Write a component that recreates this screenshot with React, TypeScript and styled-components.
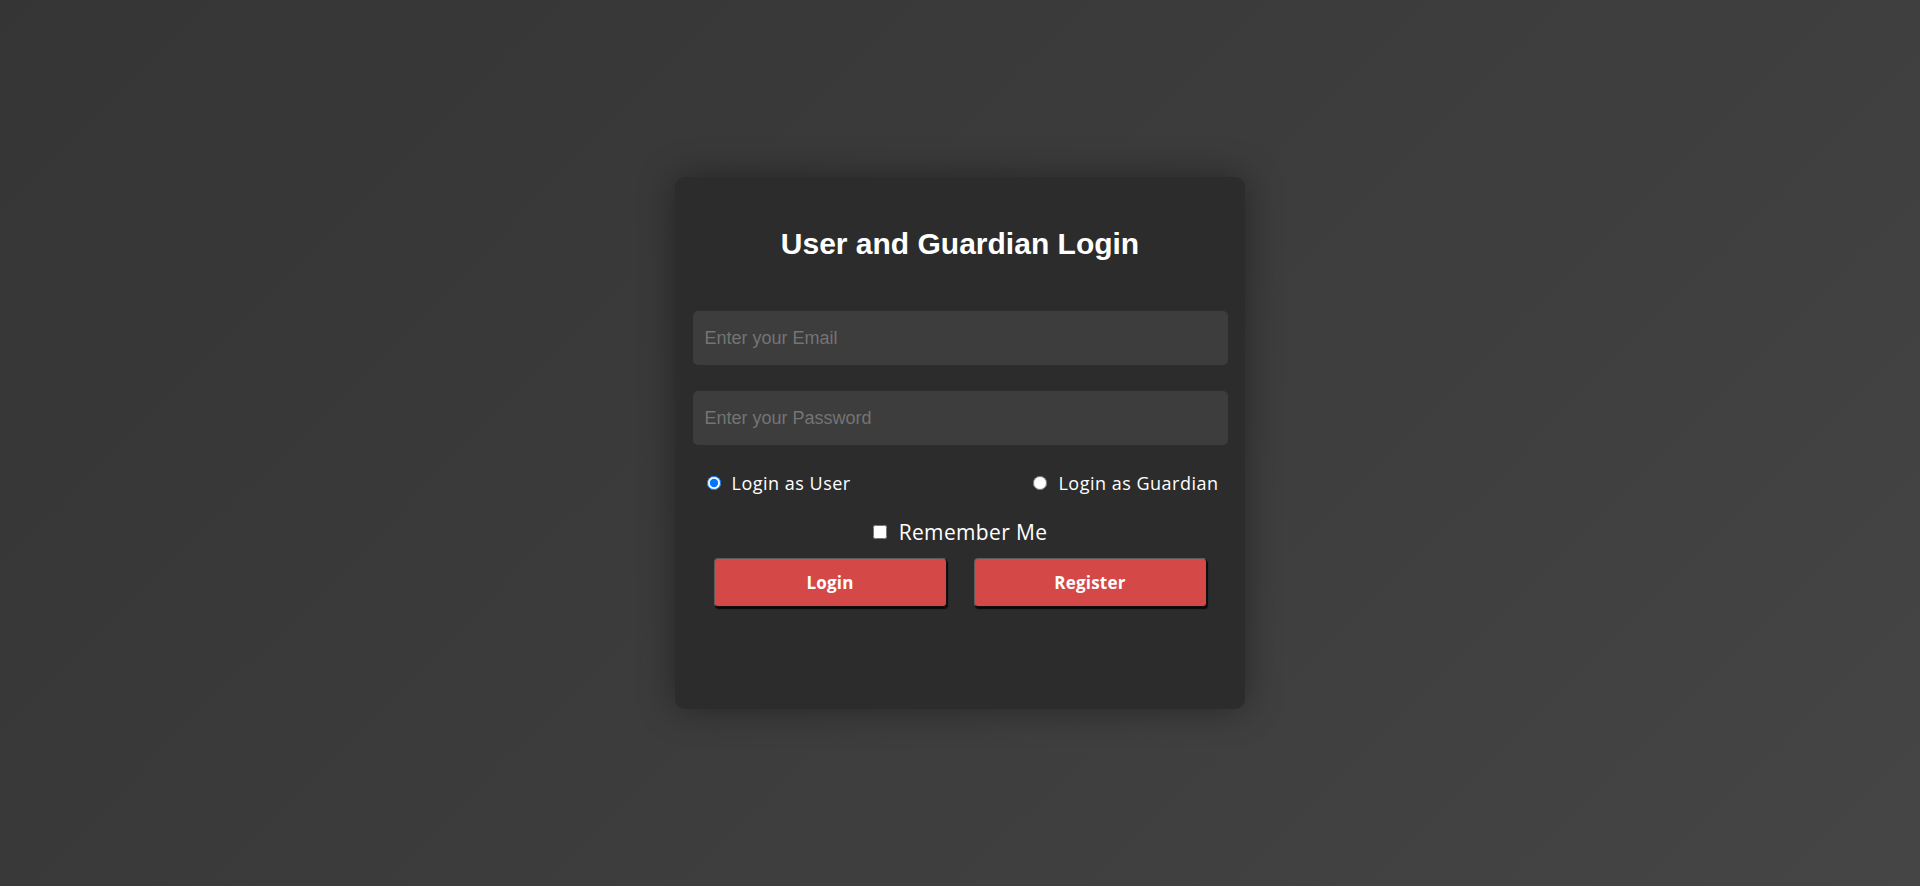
import React, { useState } from "react";
import styled, { createGlobalStyle } from "styled-components";

const GlobalStyle = createGlobalStyle`
  html, body {
    margin: 0;
    padding: 0;
    height: 100%;
  }
  body {
    background: linear-gradient(135deg, #353535 0%, #3c3c3c 50%, #454545 100%);
    font-family: "Open Sans", "Liberation Sans", Arial, sans-serif;
  }
  #root {
    height: 100%;
  }
`;

const Page = styled.main`
  height: 886px;
  display: flex;
  align-items: center;
  justify-content: center;
`;

const Card = styled.form`
  box-sizing: border-box;
  width: 570px;
  height: 532px;
  padding: 50px 0 0;
  background: #2c2c2c;
  border-radius: 10px;
  box-shadow: 0 0 36px rgba(0, 0, 0, 0.38);
  display: flex;
  flex-direction: column;
  align-items: center;
`;

const Title = styled.h2`
  margin: 0 0 50px;
  font-family: "Liberation Sans", Arial, sans-serif;
  font-weight: 700;
  font-size: 30px;
  line-height: 34px;
  color: #ffffff;
  text-align: center;
`;

const Field = styled.input<{ $gap?: number }>`
  box-sizing: border-box;
  width: 535px;
  height: 54px;
  margin: 0 0 ${(p) => p.$gap ?? 0}px;
  padding: 0 12px;
  border: none;
  border-radius: 5px;
  background: #3d3d3d;
  color: #ffffff;
  font-family: "Liberation Sans", Arial, sans-serif;
  font-size: 18px;
  outline: none;
  &::placeholder {
    color: #747474;
  }
`;

const RoleRow = styled.div`
  box-sizing: border-box;
  width: 535px;
  margin-top: 26px;
  padding: 0 9px 0 10px;
  height: 24px;
  display: flex;
  align-items: center;
  justify-content: space-between;
`;

const Option = styled.label<{ $size: number; $gap: number; $spacing: number }>`
  display: flex;
  align-items: center;
  gap: ${(p) => p.$gap}px;
  font-size: ${(p) => p.$size}px;
  letter-spacing: ${(p) => p.$spacing}px;
  line-height: 24px;
  color: #ffffff;
  cursor: pointer;
`;

const Radio = styled.input`
  width: 14px;
  height: 14px;
  margin: 0 0 0 4px;
`;

const RememberRow = styled.div`
  margin-top: 23px;
  height: 28px;
  display: flex;
  align-items: center;
  justify-content: center;
`;

const Check = styled.input`
  width: 14px;
  height: 14px;
  margin: 0;
`;

const Buttons = styled.div`
  margin-top: 12px;
  display: flex;
  gap: 27px;
`;

const ActionButton = styled.button`
  box-sizing: border-box;
  width: 233px;
  height: 49px;
  background: #d54848;
  color: #ffffff;
  font-family: "Open Sans", "Liberation Sans", Arial, sans-serif;
  font-weight: 700;
  font-size: 17px;
  letter-spacing: 0.2px;
  border: 1px solid #5c5c5c;
  border-right-color: #111;
  border-bottom-color: #111;
  border-radius: 4px;
  box-shadow: 1px 2px 1px #0a0a0a;
  cursor: pointer;
`;

export default function App() {
  const [role, setRole] = useState("user");
  const [remember, setRemember] = useState(false);
  return (
    <>
      <GlobalStyle />
      <Page>
        <Card onSubmit={(e) => e.preventDefault()}>
          <Title>User and Guardian Login</Title>
          <Field type="email" placeholder="Enter your Email" $gap={26} />
          <Field type="password" placeholder="Enter your Password" />
          <RoleRow>
            <Option $size={18} $gap={11} $spacing={0.5}>
              <Radio
                type="radio"
                name="role"
                checked={role === "user"}
                onChange={() => setRole("user")}
              />
              Login as User
            </Option>
            <Option $size={18} $gap={11} $spacing={0.5}>
              <Radio
                type="radio"
                name="role"
                checked={role === "guardian"}
                onChange={() => setRole("guardian")}
              />
              Login as Guardian
            </Option>
          </RoleRow>
          <RememberRow>
            <Option $size={21} $gap={12} $spacing={0.35}>
              <Check
                type="checkbox"
                checked={remember}
                onChange={() => setRemember(!remember)}
              />
              Remember Me
            </Option>
          </RememberRow>
          <Buttons>
            <ActionButton type="submit">Login</ActionButton>
            <ActionButton type="button">Register</ActionButton>
          </Buttons>
        </Card>
      </Page>
    </>
  );
}
